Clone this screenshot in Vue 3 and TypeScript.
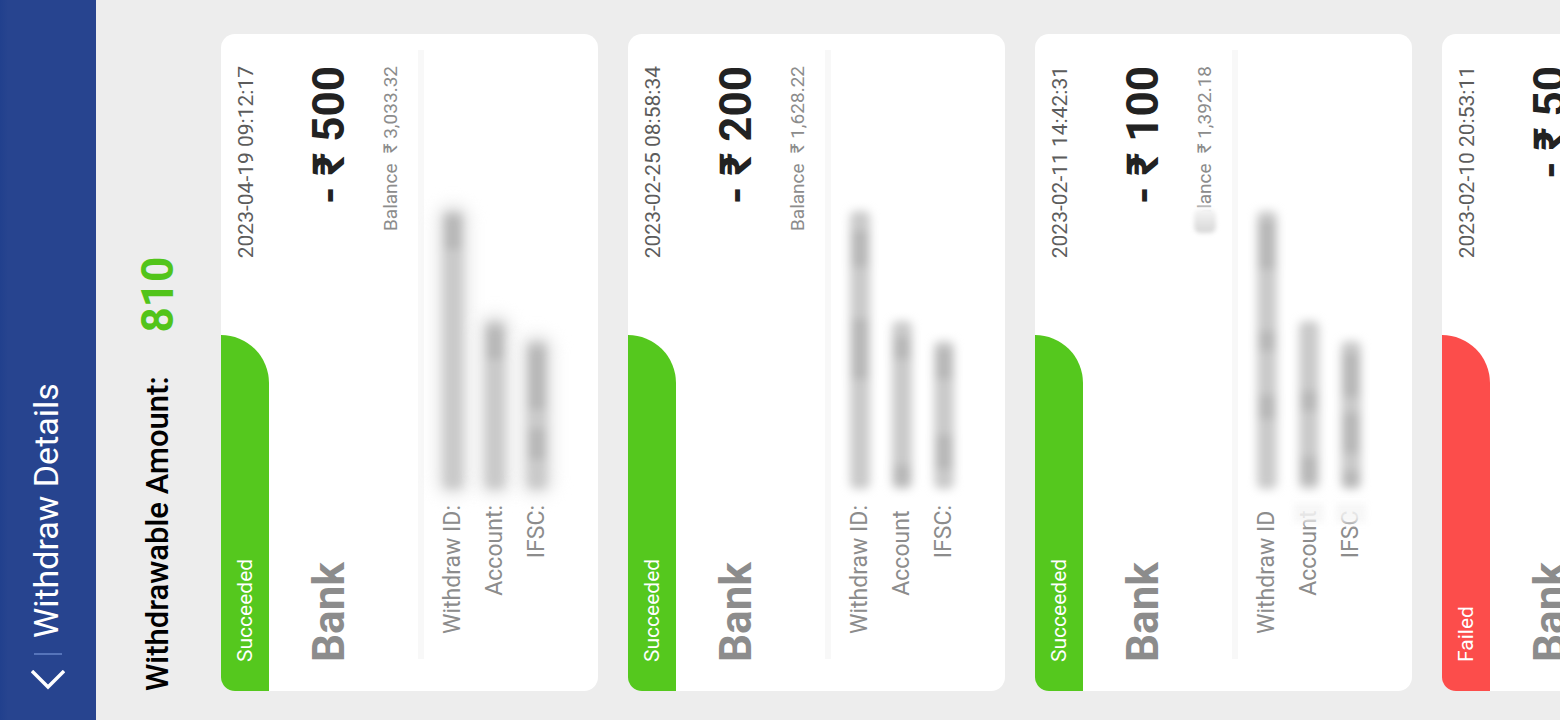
<script setup lang="ts">
interface Field {
  label: string
  colon: boolean
  length: number
  patches: { at: number; size: number }[]
  smudged?: boolean
}

interface Withdrawal {
  status: 'Succeeded' | 'Failed'
  time: string
  amount: string
  balance: string
  hazy?: boolean
  smudged?: boolean
  fields: Field[]
}

const withdrawals: Withdrawal[] = [
  {
    status: 'Succeeded',
    time: '2023-04-19 09:12:17',
    amount: '500',
    balance: '3,033.32',
    hazy: true,
    fields: [
      { label: 'Withdraw ID', colon: true, length: 278, patches: [{ at: 240, size: 32 }] },
      { label: 'Account', colon: true, length: 168, patches: [{ at: 130, size: 30 }] },
      { label: 'IFSC', colon: true, length: 148, patches: [{ at: 30, size: 30 }, { at: 80, size: 60 }] },
    ],
  },
  {
    status: 'Succeeded',
    time: '2023-02-25 08:58:34',
    amount: '200',
    balance: '1,628.22',
    fields: [
      { label: 'Withdraw ID', colon: true, length: 278, patches: [{ at: 110, size: 60 }, { at: 222, size: 36 }] },
      { label: 'Account', colon: false, length: 168, patches: [{ at: 4, size: 20 }, { at: 130, size: 22 }] },
      { label: 'IFSC', colon: true, length: 148, patches: [{ at: 20, size: 34 }, { at: 110, size: 30 }] },
    ],
  },
  {
    status: 'Succeeded',
    time: '2023-02-11 14:42:31',
    amount: '100',
    balance: '1,392.18',
    smudged: true,
    fields: [
      { label: 'Withdraw ID', colon: false, length: 278, patches: [{ at: 70, size: 24 }, { at: 138, size: 20 }, { at: 220, size: 48 }] },
      { label: 'Account', colon: false, length: 168, patches: [{ at: 6, size: 26 }, { at: 78, size: 20 }], smudged: true },
      { label: 'IFSC', colon: false, length: 148, patches: [{ at: 2, size: 16 }, { at: 36, size: 40 }, { at: 92, size: 44 }], smudged: true },
    ],
  },
  {
    status: 'Failed',
    time: '2023-02-10 20:53:11',
    amount: '50',
    balance: '1,392.18',
    fields: [],
  },
]
</script>

<template>
  <div class="screen">
    <header class="bar">
      <button class="back" type="button" aria-label="Back">
        <svg viewBox="0 0 20 34" width="20" height="34" fill="none" stroke="currentColor" stroke-width="3.4">
          <path d="M19 1 L3 17 L19 33" />
        </svg>
      </button>
      <span class="rule"></span>
      <h1 class="title">Withdraw Details</h1>
    </header>

    <main>
      <p class="total">
        <span>Withdrawable Amount:</span>
        <strong>810</strong>
      </p>

      <ul class="list">
        <li v-for="item in withdrawals" :key="item.time" class="card">
          <div class="top">
            <span class="ribbon" :class="{ failed: item.status === 'Failed' }">{{ item.status }}</span>
            <time class="time">{{ item.time }}</time>
          </div>
          <div class="sum">
            <span class="kind">Bank</span>
            <strong class="amount">- ₹ {{ item.amount }}</strong>
          </div>
          <p class="balance">
            <span class="word">Balance<i v-if="item.smudged" class="smudge"></i></span>
            <span>₹ {{ item.balance }}</span>
          </p>
          <dl class="fields" :class="{ hazy: item.hazy }">
            <div v-for="field in item.fields" :key="field.label" class="field">
              <dt>
                {{ field.label }}<span :class="{ hidden: !field.colon }">:</span>
                <i v-if="field.smudged" class="fade"></i>
              </dt>
              <dd>
                <div class="mask" :style="{ width: field.length + 'px' }">
                  <i
                    v-for="patch in field.patches"
                    :key="patch.at"
                    class="patch"
                    :style="{ left: patch.at + 'px', width: patch.size + 'px' }"
                  ></i>
                </div>
              </dd>
            </div>
          </dl>
        </li>
      </ul>
    </main>
  </div>
</template>

<style>
html,
body {
  margin: 0;
  overflow: hidden;
}
</style>

<style scoped>
/* The portrait screen is turned a quarter to the left to fill a landscape window. */
.screen {
  width: 100vh;
  height: 100vw;
  overflow: hidden;
  background: #ededed;
  transform-origin: 0 0;
  transform: translateY(100vh) rotate(-90deg);
  font-family: Roboto, "Liberation Sans", sans-serif;
  color: #000;
}

.bar {
  display: flex;
  align-items: center;
  height: 96px;
  padding-left: 30px;
  background: linear-gradient(#21408d 0, #27448f 8px);
  color: #fff;
}

.back {
  display: flex;
  padding: 0;
  border: 0;
  background: none;
  color: inherit;
}

.rule {
  width: 2px;
  height: 28px;
  margin: 0 15px 0 15px;
  background: #5674ba;
}

.title {
  margin: 0;
  padding-bottom: 4px;
  font-size: 34px;
  line-height: 44px;
  font-weight: 400;
}

.total {
  display: flex;
  align-items: center;
  gap: 44px;
  height: 125px;
  margin: 0;
  padding: 0 0 2px 29px;
  box-sizing: border-box;
  font-size: 31px;
  line-height: 48px;
  font-weight: 500;
}

.total strong {
  font-size: 44px;
  font-weight: 700;
  color: #52c41a;
}

.list {
  display: grid;
  gap: 30px;
  margin: 0 34px 0 29px;
  padding: 0;
  list-style: none;
}

.card {
  overflow: hidden;
  border-radius: 14px;
  background: #fff;
  padding-bottom: 40px;
}

.top {
  display: flex;
  justify-content: space-between;
  height: 48px;
  padding-right: 32px;
}

.ribbon {
  width: 57%;
  padding-left: 29px;
  box-sizing: border-box;
  border-bottom-right-radius: 48px;
  background: #55c81e;
  color: #fff;
  font-size: 21px;
  line-height: 48px;
}

.ribbon.failed {
  background: #fc4d4b;
}

.time {
  font-size: 21px;
  line-height: 50px;
  color: #5c5c5c;
}

.sum {
  display: flex;
  justify-content: space-between;
  margin-top: 33px;
  padding: 0 32px 0 29px;
  font-size: 44px;
  line-height: 54px;
}

.kind {
  font-weight: 700;
  color: #8c8c8c;
}

.amount {
  font-weight: 700;
  color: #222;
}

.balance {
  display: flex;
  justify-content: flex-end;
  gap: 10px;
  margin: 23px 32px 15px;
  font-size: 19px;
  line-height: 24px;
  color: #8c8c8c;
}

.word {
  position: relative;
}

.smudge {
  position: absolute;
  left: -2px;
  top: 1px;
  width: 24px;
  height: 22px;
  border-radius: 6px;
  background: linear-gradient(90deg, #d6d6d6, #f6f6f6);
  box-shadow: 0 0 0 2px #fff;
  filter: blur(2px);
}

.fields {
  margin: 0 16px 0 32px;
  padding-top: 8px;
  border-top: 6px solid #f8f8f8;
}

.field {
  display: grid;
  grid-template-columns: 154px 1fr;
  gap: 16px;
  align-items: center;
}

.field dt {
  position: relative;
  font-size: 23px;
  line-height: 42px;
  text-align: right;
  color: #8c8c8c;
}

.hidden {
  visibility: hidden;
}

.fade {
  position: absolute;
  right: -2px;
  top: 6px;
  width: 20px;
  height: 30px;
  background: rgba(246, 246, 246, 0.85);
  filter: blur(3px);
}

.field dd {
  margin: 0;
}

.mask {
  position: relative;
  height: 20px;
  border-radius: 6px;
  background: #cacaca;
  filter: blur(5px);
}

.hazy .mask {
  box-shadow: 0 0 14px 6px #e4e4e4;
}

.patch {
  position: absolute;
  top: 2px;
  height: 16px;
  background: #b7b7b7;
}
</style>
